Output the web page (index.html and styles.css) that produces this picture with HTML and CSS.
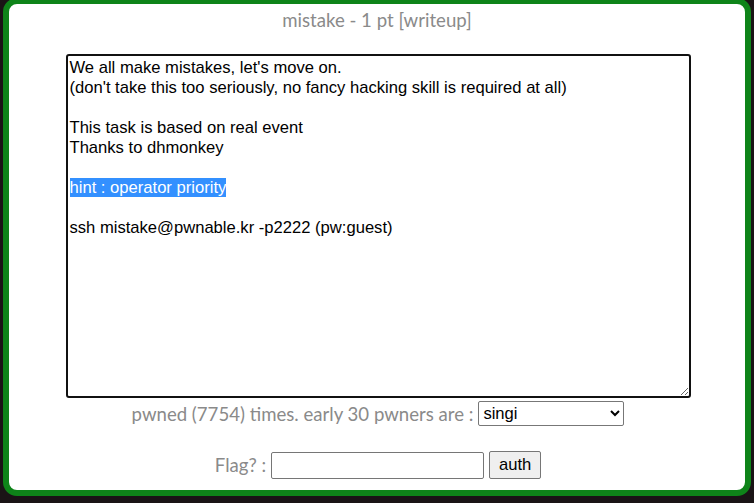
FILE: index.html
```
<!DOCTYPE html>
<html lang="en">
<head>
  <meta charset="UTF-8">
  <title>mistake - 1 pt [writeup]</title>
  <link rel="stylesheet" href="styles.css">
</head>
<body>
<div class="frame">
  <h1 class="title">mistake - 1 pt [writeup]</h1>
  <div class="desc">We all make mistakes, let's move on.<br>(don't take this too seriously, no fancy hacking skill is required at all)<br><br>This task is based on real event<br>Thanks to dhmonkey<br><br><span class="sel">hint : operator priority</span><br><br>ssh mistake@pwnable.kr -p2222 (pw:guest)</div>
  <div class="row pwners">
    pwned (7754) times. early 30 pwners are :
    <select class="pick">
      <option>singi</option>
    </select>
  </div>
  <form class="row flag">
    Flag? :
    <input type="text" class="flag-input">
    <button type="button" class="auth">auth</button>
  </form>
</div>
</body>
</html>
```

FILE: styles.css
```
html, body {
    margin: 0;
    height: 100%;
}

body {
    background-color: #1a1416;
    padding: 0 3px 5px 3px;
    box-sizing: border-box;
}

.frame {
    height: 100%;
    box-sizing: border-box;
    margin-top: -2px;
    border: 6px solid #0e8419;
    border-radius: 14px;
    background-color: #fff;
    text-align: center;
    font-family: Lato, "Open Sans", sans-serif;
    color: #8a8a8a;
}

.title {
    margin: 6px 0 0 0;
    font-size: 18.6px;
    font-weight: normal;
    line-height: 20px;
}

.desc {
    width: 625px;
    height: 344px;
    box-sizing: border-box;
    margin: 24px auto 0 auto;
    position: relative;
    left: 1px;
    padding: 2px 2px;
    border: 2px solid #111;
    border-radius: 3px;
    resize: both;
    overflow: auto;
    text-align: left;
    font-family: "Liberation Sans", Arial, sans-serif;
    font-size: 16.6px;
    line-height: 20px;
    color: #000;
}

.sel {
    background-color: #3390ff;
    color: #fff;
}

.row {
    display: flex;
    justify-content: center;
    align-items: center;
    gap: 5px;
    font-size: 18.6px;
}

.pwners {
    margin-top: 3px;
    padding-left: 2px;
}

.flag {
    margin: 25px 0 0 0;
    padding-left: 2px;
}

.pick {
    width: 146px;
    height: 25px;
    font-family: "Liberation Sans", Arial, sans-serif;
    font-size: 16.6px;
    color: #000;
    border: 1px solid #777;
    border-radius: 2px;
    background: #fff;
}

.flag-input {
    width: 213px;
    height: 27px;
    box-sizing: border-box;
    border: 1px solid #767676;
    border-radius: 2px;
    margin: 0;
}

.auth {
    width: 52px;
    height: 28px;
    margin: 0;
    font-family: "Liberation Sans", Arial, sans-serif;
    font-size: 16.6px;
    color: #000;
    background-color: #efefef;
    border: 1px solid #767676;
    border-radius: 2px;
}
```
